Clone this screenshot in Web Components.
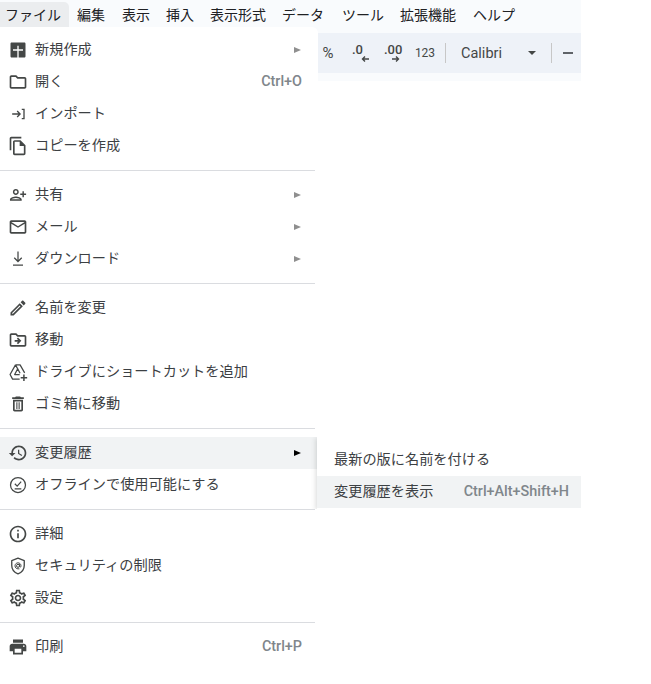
<!DOCTYPE html>
<html lang="ja">
<head>
<meta charset="utf-8">
<title>ファイル</title>
<style>
  html, body { margin: 0; background: #fff; }
  body { font-family: "Noto Sans CJK JP", "Noto Sans", sans-serif; height: 684px; overflow: hidden; }
  #app { position: relative; width: 651px; height: 684px; }
</style>
</head>
<body>
<div id="app">
  <doc-menubar>
    <bar-item active>ファイル</bar-item>
    <bar-item>編集</bar-item>
    <bar-item gap="1">表示</bar-item>
    <bar-item>挿入</bar-item>
    <bar-item>表示形式</bar-item>
    <bar-item>データ</bar-item>
    <bar-item gap="2">ツール</bar-item>
    <bar-item>拡張機能</bar-item>
    <bar-item gap="1">ヘルプ</bar-item>
  </doc-menubar>
  <doc-toolbar></doc-toolbar>

  <doc-menu>
    <menu-row icon="add" arrow>新規作成</menu-row>
    <menu-row icon="folder" shortcut="Ctrl+O">開く</menu-row>
    <menu-row icon="import">インポート</menu-row>
    <menu-row icon="copy">コピーを作成</menu-row>
    <menu-sep></menu-sep>
    <menu-row icon="share" arrow>共有</menu-row>
    <menu-row icon="mail" arrow>メール</menu-row>
    <menu-row icon="download" arrow>ダウンロード</menu-row>
    <menu-sep></menu-sep>
    <menu-row icon="pencil">名前を変更</menu-row>
    <menu-row icon="move">移動</menu-row>
    <menu-row icon="shortcut">ドライブにショートカットを追加</menu-row>
    <menu-row icon="trash">ゴミ箱に移動</menu-row>
    <menu-sep></menu-sep>
    <menu-row icon="history" arrow active>変更履歴</menu-row>
    <menu-row icon="offline">オフラインで使用可能にする</menu-row>
    <menu-sep></menu-sep>
    <menu-row icon="info">詳細</menu-row>
    <menu-row icon="security">セキュリティの制限</menu-row>
    <menu-row icon="settings">設定</menu-row>
    <menu-sep></menu-sep>
    <menu-row icon="print" shortcut="Ctrl+P">印刷</menu-row>
  </doc-menu>

  <doc-submenu>
    <menu-row plain>最新の版に名前を付ける</menu-row>
    <menu-row plain active shortcut="Ctrl+Alt+Shift+H">変更履歴を表示</menu-row>
  </doc-submenu>
</div>

<script>
const ICONS = {
  add: '<path fill="currentColor" d="M19.5 3h-15C3.6 3 3 3.6 3 4.5v15c0 .9.6 1.5 1.5 1.5h15c.9 0 1.5-.6 1.5-1.5v-15c0-.9-.6-1.5-1.5-1.5zM18 12.8h-5.2V21h-1.6v-8.2H6v-1.6h5.2V7h1.6v4.2H18v1.6z"/>',
  folder: '<path fill="currentColor" d="M9.17 6l2 2H20v10H4V6h5.17M10 4H4c-1.1 0-1.99.9-1.99 2L2 18c0 1.1.9 2 2 2h16c1.1 0 2-.9 2-2V8c0-1.1-.9-2-2-2h-8l-2-2z"/>',
  import: '<path fill="none" stroke="currentColor" stroke-width="1.6" d="M5 12h9.5M11 8.5l3.5 3.500-3.500 3.500M16.500 6.500h2.700v11h-2.700"/>',
  copy: '<path fill="currentColor" d="M16 1H4c-1.1 0-2 .9-2 2v14h2V3h12V1zm-1 4H8c-1.1 0-1.99.9-1.99 2L6 21c0 1.1.89 2 1.99 2H19c1.1 0 2-.9 2-2V11l-6-6zM8 21V7h6v5h5v9H8z"/>',
  share: '<path transform="matrix(-.88 0 0 .88 22.6 1.400)" fill="currentColor" d="M15 12c2.21 0 4-1.79 4-4s-1.79-4-4-4-4 1.79-4 4 1.79 4 4 4zm0-6c1.1 0 2 .9 2 2s-.9 2-2 2-2-.9-2-2 .9-2 2-2zm0 8c-2.67 0-8 1.34-8 4v2h16v-2c0-2.66-5.33-4-8-4zm-6 4c.22-.72 3.31-2 6-2 2.7 0 5.8 1.29 6 2H9zm-3-3v-3h3v-2H6V7H4v3H1v2h3v3h2z"/>',
  mail: '<path fill="currentColor" d="M22 6c0-1.1-.9-2-2-2H4c-1.1 0-2 .9-2 2v12c0 1.1.9 2 2 2h16c1.1 0 2-.9 2-2V6zm-2 0l-8 5-8-5h16zm0 12H4V8l8 5 8-5v10z"/>',
  download: '<path fill="none" stroke="currentColor" stroke-width="1.500" d="M12 3v11.500M7.500 10.500l4.500 4.500 4.500-4.500M6 19.200h12"/>',
  pencil: '<path fill="currentColor" d="M3 17.25V21h3.75L17.81 9.94l-3.75-3.75L3 17.25zM5.92 19H5v-.92l9.06-9.06.92.92L5.92 19zM20.71 5.63l-2.34-2.34c-.2-.2-.45-.29-.71-.29s-.51.1-.7.29l-1.83 1.83 3.75 3.75 1.83-1.83c.39-.39.39-1.02 0-1.41z"/>',
  move: '<path fill="currentColor" d="M20 6h-8l-2-2H4c-1.1 0-1.99.9-1.99 2L2 18c0 1.1.9 2 2 2h16c1.1 0 2-.9 2-2V8c0-1.1-.9-2-2-2zm0 12H4V6h5.17l2 2H20v10zm-8.01-9l-1.41 1.41L12.16 12H8v2h4.16l-1.59 1.59L11.99 17 16 13.01 11.99 9z"/>',
  shortcut: '<path fill="none" stroke="currentColor" stroke-width="1.500" stroke-linejoin="round" d="M9 3.500h5.500l5.500 9.500M9 3.500L2.500 15l3 5.500H14M9 3.500l5.500 10M12 7.500L8 15h6"/><path fill="currentColor" d="M18.200 15h1.800v3h3v1.800h-3v3h-1.800v-3h-3V18h3z"/>',
  trash: '<path fill="currentColor" d="M16 9v10H8V9h8m-1.5-6h-5l-1 1H5v2h14V4h-3.5l-1-1zM18 7H6v12c0 1.1.9 2 2 2h8c1.1 0 2-.9 2-2V7z"/><path fill="currentColor" d="M10 10h1.300v8H10zM12.700 10H14v8h-1.300z"/>',
  history: '<path fill="currentColor" d="M13 3c-4.97 0-9 4.03-9 9H1l3.89 3.89.07.14L9 12H6c0-3.87 3.13-7 7-7s7 3.13 7 7-3.13 7-7 7c-1.93 0-3.68-.79-4.94-2.06l-1.42 1.42C8.27 19.99 10.51 21 13 21c4.97 0 9-4.03 9-9s-4.03-9-9-9zm-1 5v5l4.28 2.54.72-1.21-3.5-2.08V8H12z"/>',
  offline: '<circle cx="12" cy="12" r="9" fill="none" stroke="currentColor" stroke-width="1.500"/><path fill="none" stroke="currentColor" stroke-width="1.500" d="M8.200 10.500l2.800 2.800 4.800-5.300M8 16.500h8"/>',
  info: '<path fill="currentColor" d="M11 7h2v2h-2zm0 4h2v6h-2zm1-9C6.48 2 2 6.48 2 12s4.48 10 10 10 10-4.48 10-10S17.52 2 12 2zm0 18c-4.41 0-8-3.59-8-8s3.59-8 8-8 8 3.59 8 8-3.59 8-8 8z"/>',
  security: '<path fill="none" stroke="currentColor" stroke-width="1.600" stroke-linejoin="round" d="M12 2.500l7.500 3v6c0 4.500-3.100 8.300-7.500 10-4.400-1.700-7.500-5.500-7.500-10v-6z"/><circle cx="12" cy="11.800" r="1.800" fill="none" stroke="currentColor" stroke-width="1.200"/><path fill="none" stroke="currentColor" stroke-width="1.200" d="M13.800 9.800v2.500c0 1.300 1.800 1.300 1.800 0v-.5c0-2-1.600-3.600-3.600-3.600s-3.600 1.600-3.600 3.600 1.600 3.600 3.600 3.600h1.700"/>',
  settings: '<path fill="currentColor" d="M19.43 12.98c.04-.32.07-.64.07-.98 0-.34-.03-.66-.07-.98l2.11-1.65c.19-.15.24-.42.12-.64l-2-3.46c-.09-.16-.26-.25-.44-.25-.06 0-.12.01-.17.03l-2.49 1c-.52-.4-1.08-.73-1.69-.98l-.38-2.65C14.46 2.18 14.25 2 14 2h-4c-.25 0-.46.18-.49.42l-.38 2.65c-.61.25-1.17.59-1.69.98l-2.49-1c-.06-.02-.12-.03-.18-.03-.17 0-.34.09-.43.25l-2 3.46c-.13.22-.07.49.12.64l2.11 1.65c-.04.32-.07.65-.07.98 0 .33.03.66.07.98l-2.11 1.65c-.19.15-.24.42-.12.64l2 3.46c.09.16.26.25.44.25.06 0 .12-.01.17-.03l2.49-1c.52.4 1.08.73 1.69.98l.38 2.65c.03.24.24.42.49.42h4c.25 0 .46-.18.49-.42l.38-2.65c.61-.25 1.17-.59 1.69-.98l2.49 1c.06.02.12.03.18.03.17 0 .34-.09.43-.25l2-3.46c.12-.22.07-.49-.12-.64l-2.11-1.65zm-1.98-1.71c.04.31.05.52.05.73 0 .21-.02.43-.05.73l-.14 1.13.89.7 1.08.84-.7 1.21-1.27-.51-1.04-.42-.9.68c-.43.32-.84.56-1.25.73l-1.06.43-.16 1.13-.2 1.35h-1.4l-.19-1.35-.16-1.13-1.06-.43c-.43-.18-.83-.41-1.23-.71l-.91-.7-1.06.43-1.27.51-.7-1.21 1.08-.84.89-.7-.14-1.13c-.03-.31-.05-.54-.05-.74s.02-.43.05-.73l.14-1.13-.89-.7-1.08-.84.7-1.21 1.27.51 1.04.42.9-.68c.43-.32.84-.56 1.25-.73l1.06-.43.16-1.13.2-1.35h1.39l.19 1.35.16 1.13 1.06.43c.43.18.83.41 1.23.71l.91.7 1.06-.43 1.27-.51.7 1.21-1.07.85-.89.7.14 1.13zM12 8c-2.21 0-4 1.79-4 4s1.79 4 4 4 4-1.79 4-4-1.79-4-4-4zm0 6c-1.1 0-2-.9-2-2s.9-2 2-2 2 .9 2 2-.9 2-2 2z"/>',
  print: '<path fill="currentColor" d="M19 8H5c-1.66 0-3 1.34-3 3v6h4v4h12v-4h4v-6c0-1.66-1.34-3-3-3zm-3 11H8v-5h8v5zm3-7c-.55 0-1-.45-1-1s.45-1 1-1 1 .45 1 1-.45 1-1 1zm-1-9H6v4h12V3z"/>'
}

class DocMenubar extends HTMLElement {
  _root = this.attachShadow({ mode: 'open' })
  connectedCallback() {
    this._root.innerHTML = `
      <style>
        :host {
          display: flex;
          width: 581px;
          height: 33px;
          box-sizing: border-box;
          padding: 2px 0 0 0;
          background: #f9fbfd;
        }
      </style>
      <slot></slot>
    `
  }
}

class BarItem extends HTMLElement {
  _root = this.attachShadow({ mode: 'open' })
  connectedCallback() {
    this._root.innerHTML = `
      <style>
        :host {
          display: block;
          height: 25px;
          padding: 0 8px;
          font: 14px/25px "Noto Sans CJK JP", sans-serif;
          color: #202124;
          margin-left: ${this.getAttribute('gap') || 0}px;
        }
        :host([active]) {
          background: #ebedef;
          border-radius: 0 5px 0 0;
          padding: 0 8px 0 5px;
        }
      </style>
      <slot></slot>
    `
  }
}

class DocToolbar extends HTMLElement {
  _root = this.attachShadow({ mode: 'open' })
  _template = this._root.innerHTML = `
    <style>
      :host {
        display: flex;
        align-items: center;
        width: 581px;
        height: 40px;
        box-sizing: border-box;
        padding-left: 321px;
        background: #eef2f8;
        color: #444746;
        font: 13px "Roboto", sans-serif;
        box-shadow: 0 8px 0 #f9fbfd;
      }
      .pct { width: 14px; text-align: center; font-size: 15px; }
      .dec { display: flex; flex-direction: column; align-items: flex-start; width: 16px; font-weight: 500; font-size: 13px; line-height: 12px; }
      .dec svg { display: block; width: 8px; height: 6px; }
      .num { width: 24px; text-align: center; font-size: 12px; }
      .div { width: 1px; height: 20px; background: #c7c7c7; }
      .font { font: 14.500px "Roboto", sans-serif; color: #444746; width: 65px; }
      .caret { width: 0; height: 0; border: 4px solid transparent; border-top: 4px solid #444746; border-bottom: 0; }
      .minus { width: 10px; height: 2px; background: #5f6368; }
    </style>
    <span class="pct">%</span>
    <span class="dec" style="margin-left:17px">.0<svg style="margin-left:9px" viewBox="0 0 8 6"><path d="M8 3H2M4 .5L1.500 3 4 5.500" fill="none" stroke="#444746" stroke-width="1.400"/></svg></span>
    <span class="dec" style="margin-left:16px">.00<svg style="margin-left:8px" viewBox="0 0 8 6"><path d="M0 3h6M4 .5L6.500 3 4 5.500" fill="none" stroke="#444746" stroke-width="1.400"/></svg></span>
    <span class="num" style="margin-left:13px">123</span>
    <span class="div" style="margin-left:8px"></span>
    <span class="font" style="margin-left:15px">Calibri</span>
    <span class="caret" style="margin-left:2px"></span>
    <span class="div" style="margin-left:15px"></span>
    <span class="minus" style="margin-left:11px"></span>
  `
}

class DocMenu extends HTMLElement {
  _root = this.attachShadow({ mode: 'open' })
  _template = this._root.innerHTML = `
    <style>
      :host {
        display: block;
        position: absolute;
        top: 27px;
        left: 0;
        width: 318px;
        box-sizing: border-box;
        padding: 7px 0 6px;
        background: #fff;
        border-radius: 0 6px 0 0;
      }
      /* the shadow only shows against the toolbar, the rest melts into the page */
      .edge {
        position: absolute;
        top: 0;
        left: 0;
        right: 0;
        height: 60px;
        z-index: -1;
        border-radius: 0 6px 0 0;
        box-shadow: 1px 1px 4px rgba(60,64,67,.22);
        clip-path: inset(-6px -6px 0 0);
      }
    </style>
    <div class="edge"></div>
    <slot></slot>
  `
}

class MenuSep extends HTMLElement {
  _root = this.attachShadow({ mode: 'open' })
  _template = this._root.innerHTML = `
    <style>
      :host {
        display: block;
        width: 315px;
        height: 1px;
        margin: 8px 0;
        background: #dadce0;
      }
    </style>
  `
}

class MenuRow extends HTMLElement {
  _root = this.attachShadow({ mode: 'open' })
  connectedCallback() {
    const icon = this.getAttribute('icon')
    const shortcut = this.getAttribute('shortcut')
    this._root.innerHTML = `
      <style>
        :host {
          display: flex;
          align-items: center;
          height: 32px;
          box-sizing: border-box;
          padding: 0 16px 0 8px;
          font: 14.2px/32px "Noto Sans CJK JP", sans-serif;
          color: #3c4043;
        }
        :host([plain]) { padding: 0 12px 0 17px; }
        :host([active]) { background: #f1f3f4; }
        svg { width: 20px; height: 20px; margin-right: 7px; flex: none; color: #444746; }
        .label { flex: 1; white-space: nowrap; line-height: 28px; padding-bottom: 4px; }
        .key { font: 500 14.4px "Roboto", sans-serif; color: #80868b; padding-bottom: 2px; }
        .arrow { width: 0; height: 0; margin-right: 1px; border-left: 7px solid #8f8f8f; border-top: 3.5px solid transparent; border-bottom: 3.5px solid transparent; }
        :host([active]) .arrow { border-left-color: #000; }
      </style>
      ${icon ? `<svg viewBox="0 0 24 24">${ICONS[icon]}</svg>` : ''}
      <span class="label"><slot></slot></span>
      ${shortcut ? `<span class="key">${shortcut}</span>` : ''}
      ${this.hasAttribute('arrow') ? '<span class="arrow"></span>' : ''}
    `
  }
}

class DocSubmenu extends HTMLElement {
  _root = this.attachShadow({ mode: 'open' })
  _template = this._root.innerHTML = `
    <style>
      :host {
        display: block;
        position: absolute;
        top: 437px;
        left: 317px;
        width: 264px;
        box-sizing: border-box;
        padding: 7px 0 0;
        height: 72px;
        background: #fff;
        box-shadow: -1px 1px 5px rgba(60,64,67,.2);
        clip-path: inset(0 0 0 -7px);
      }
    </style>
    <slot></slot>
  `
}

customElements.define('doc-menubar', DocMenubar)
customElements.define('bar-item', BarItem)
customElements.define('doc-toolbar', DocToolbar)
customElements.define('doc-menu', DocMenu)
customElements.define('menu-sep', MenuSep)
customElements.define('menu-row', MenuRow)
customElements.define('doc-submenu', DocSubmenu)
</script>
</body>
</html>
